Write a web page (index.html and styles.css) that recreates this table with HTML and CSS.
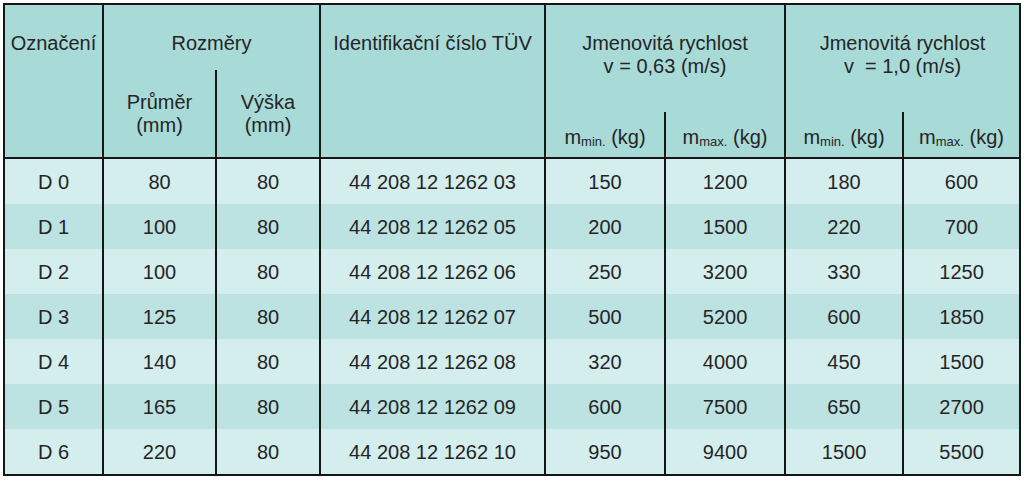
FILE: index.html
```html
<!DOCTYPE html>
<html lang="cs">
<head>
<meta charset="utf-8">
<title>Tabulka</title>
<link rel="stylesheet" href="styles.css">
</head>
<body>
<table class="spec">
  <colgroup>
    <col class="c1"><col class="c2"><col class="c3"><col class="c4">
    <col class="c5"><col class="c6"><col class="c7"><col class="c8">
  </colgroup>
  <thead>
    <tr class="ra">
      <th rowspan="3" class="top">Označení</th>
      <th colspan="2" class="top">Rozměry</th>
      <th rowspan="3" class="top">Identifikační číslo TÜV</th>
      <th colspan="2" rowspan="2" class="top">Jmenovitá rychlost<br>v = 0,63 (m/s)</th>
      <th colspan="2" rowspan="2" class="top">Jmenovitá rychlost<br>v &nbsp;= 1,0 (m/s)</th>
    </tr>
    <tr class="rb">
      <th rowspan="2">Průměr<br>(mm)</th>
      <th rowspan="2">Výška<br>(mm)</th>
    </tr>
    <tr class="rc">
      <th class="m">m<sub>min.</sub> (kg)</th>
      <th class="m">m<sub>max.</sub> (kg)</th>
      <th class="m">m<sub>min.</sub> (kg)</th>
      <th class="m">m<sub>max.</sub> (kg)</th>
    </tr>
  </thead>
  <tbody>
    <tr><td>D 0</td><td>80</td><td>80</td><td>44 208 12 1262 03</td><td>150</td><td>1200</td><td>180</td><td>600</td></tr>
    <tr><td>D 1</td><td>100</td><td>80</td><td>44 208 12 1262 05</td><td>200</td><td>1500</td><td>220</td><td>700</td></tr>
    <tr><td>D 2</td><td>100</td><td>80</td><td>44 208 12 1262 06</td><td>250</td><td>3200</td><td>330</td><td>1250</td></tr>
    <tr><td>D 3</td><td>125</td><td>80</td><td>44 208 12 1262 07</td><td>500</td><td>5200</td><td>600</td><td>1850</td></tr>
    <tr><td>D 4</td><td>140</td><td>80</td><td>44 208 12 1262 08</td><td>320</td><td>4000</td><td>450</td><td>1500</td></tr>
    <tr><td>D 5</td><td>165</td><td>80</td><td>44 208 12 1262 09</td><td>600</td><td>7500</td><td>650</td><td>2700</td></tr>
    <tr><td>D 6</td><td>220</td><td>80</td><td>44 208 12 1262 10</td><td>950</td><td>9400</td><td>1500</td><td>5500</td></tr>
  </tbody>
</table>
</body>
</html>
```
FILE: styles.css
```css
html, body {
  margin: 0;
  padding: 0;
  background: #ffffff;
}
body {
  padding: 3px 0 0 3px;
  font-family: "Liberation Sans", Arial, sans-serif;
  color: #262425;
}
.spec {
  border-collapse: separate;
  border-spacing: 0;
  table-layout: fixed;
  width: 1018px;
  border-top: 2px solid #161616;
  border-right: 2px solid #161616;
  border-bottom: 2px solid #161616;
  font-size: 20px;
  line-height: 23px;
}
.c1 { width: 99px; }
.c2 { width: 113px; }
.c3 { width: 104px; }
.c4 { width: 225px; }
.c5 { width: 120px; }
.c6 { width: 120px; }
.c7 { width: 118px; }
.c8 { width: 117px; }

.spec th, .spec td {
  border-left: 2px solid #161616;
  padding: 0;
  text-align: center;
  font-weight: normal;
}
.spec th {
  background: #a8dbd8;
  vertical-align: middle;
}
.spec th.top {
  vertical-align: top;
  padding-top: 27px;
}
.ra { height: 65px; }
.rb { height: 42px; }
.rc { height: 45px; }
.spec th.m { padding-top: 5px; }
.spec sub {
  font-size: 13px;
  vertical-align: -2px;
  line-height: 0;
}
.spec td {
  height: 45px;
  vertical-align: middle;
  padding-top: 2px;
  box-sizing: border-box;
}
.spec tbody tr:nth-child(odd) td { background: #d4eeee; }
.spec tbody tr:nth-child(even) td { background: #bce2e2; }
.spec tbody tr:first-child td { border-top: 2px solid #161616; height: 47px; }
```
